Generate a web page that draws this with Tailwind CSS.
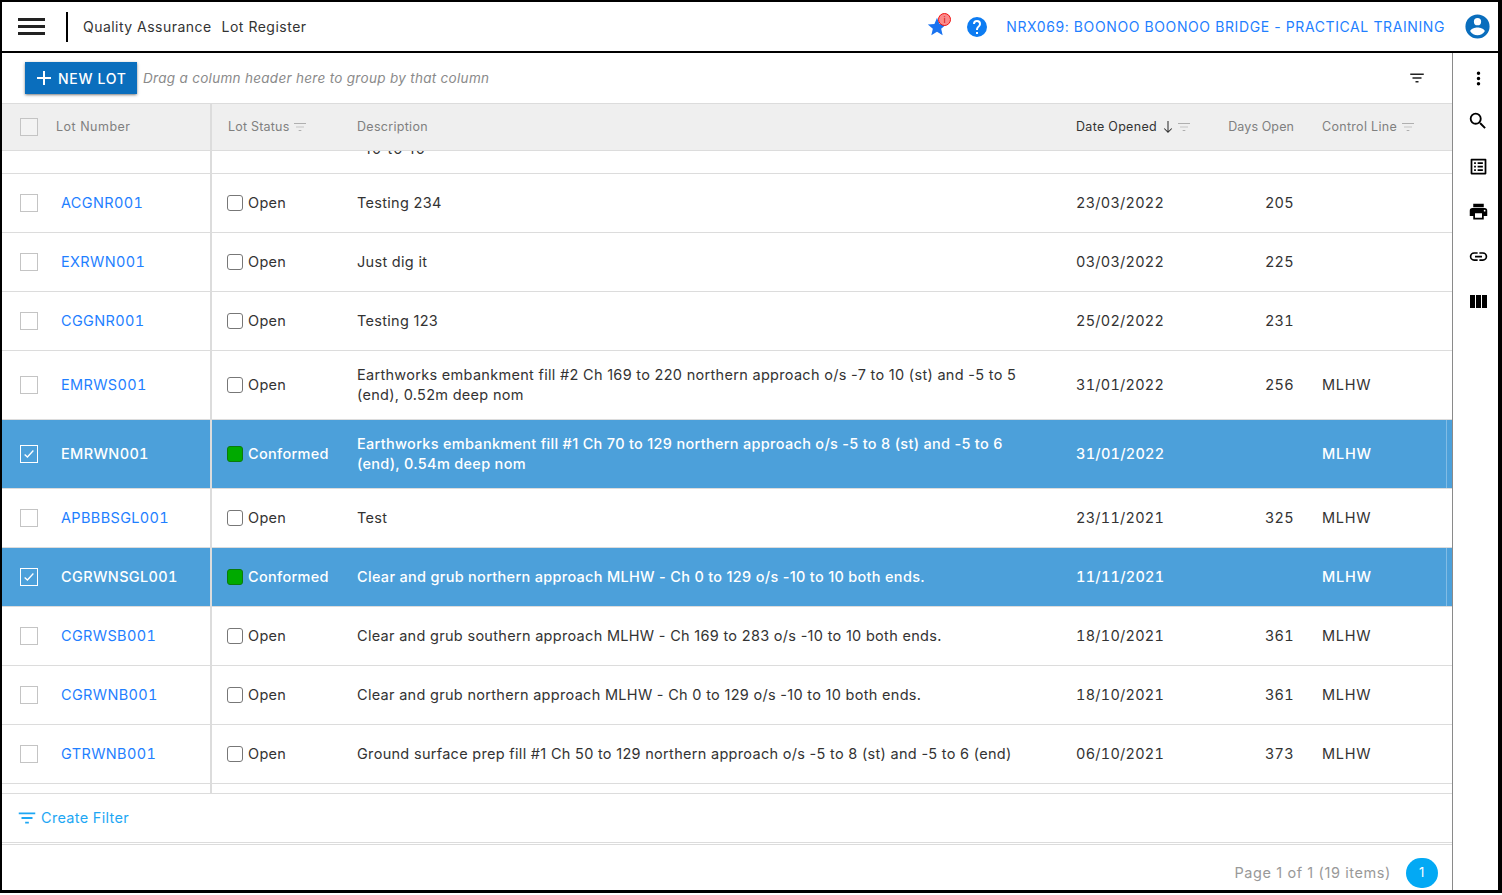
<!DOCTYPE html>
<html lang="en">
<head>
  <meta charset="UTF-8">
  <title>Lot Register</title>
  <script src="https://cdn.jsdelivr.net/npm/@tailwindcss/browser@4"></script>
</head>
<body class="bg-white font-['Inter',sans-serif] text-[14.5px] tracking-[0.3px] text-[#333] overflow-hidden">
  <div class="w-[1502px] h-[893px] border-t-2 border-l-2 border-r-4 border-b-[3px] border-black flex flex-col overflow-hidden bg-white">

    <!-- top bar -->
    <header class="h-[49px] shrink-0 border-b-2 border-black flex items-center box-content">
      <div class="ml-[16px] w-[27px] flex flex-col gap-[4px]">
        <span class="h-[3px] bg-[#222]"></span><span class="h-[3px] bg-[#222]"></span><span class="h-[3px] bg-[#222]"></span>
      </div>
      <div class="ml-[21px] w-0.5 h-[30px] bg-black"></div>
      <span class="ml-[15px] text-[14px] tracking-[0.47px]">Quality Assurance</span>
      <span class="ml-[10px] text-[14px] tracking-[0.5px]">Lot Register</span>
      <div class="ml-auto flex items-center">
        <div class="relative w-[22px] h-[22px]">
          <svg viewBox="0 0 24 24" class="w-[22px] h-[22px] fill-[#1a73f0]"><path d="M12 17.27 18.18 21l-1.64-7.03L22 9.24l-7.19-.61L12 2 9.19 8.63 2 9.24l5.46 4.73L5.82 21z"/></svg>
          <span class="absolute -top-[3px] left-[12px] w-[13px] h-[13px] rounded-full bg-[#fb8a8a] border border-[#f01010] text-[#d01010] text-[9px] leading-[11px] text-center">i</span>
        </div>
        <svg viewBox="0 0 24 24" class="ml-[17px] w-6 h-6 fill-[#0d7cf2]"><path d="M12 2a10 10 0 1 0 0 20 10 10 0 0 0 0-20zm1 17h-2v-2h2v2zm2.07-7.75-.9.92C13.45 12.9 13 13.5 13 15h-2v-.5c0-1.1.45-2.1 1.17-2.83l1.24-1.26A2 2 0 1 0 10 9H8a4 4 0 1 1 8 0c0 .88-.36 1.68-.93 2.25z"/></svg>
        <span class="ml-[17px] text-[14px] text-[#1f7fff] tracking-[0.6px]">NRX069: BOONOO BOONOO BRIDGE - PRACTICAL TRAINING</span>
        <svg viewBox="0 0 24 24" class="ml-[18px] mr-[6px] w-[29px] h-[29px] fill-[#0a6ebd]"><path d="M12 2a10 10 0 1 0 0 20 10 10 0 0 0 0-20zm0 3a3 3 0 1 1 0 6 3 3 0 0 1 0-6zm0 14.2a7.2 7.2 0 0 1-6-3.22c.03-1.99 4-3.08 6-3.08s5.97 1.09 6 3.08a7.2 7.2 0 0 1-6 3.22z"/></svg>
      </div>
    </header>

    <div class="flex-1 flex min-h-0">
      <main class="w-[1451px] shrink-0 border-r border-[#8a8a8a] flex flex-col min-h-0">

        <!-- group bar -->
        <div class="h-[50px] shrink-0 flex items-center">
          <button class="ml-[23px] w-[112px] h-8 bg-[#0a6ebd] text-white text-[14px] tracking-[0.7px] font-medium flex items-center pl-[7px] gap-[2px] shadow-sm shadow-black/40">
            <svg viewBox="0 0 24 24" class="w-6 h-6 fill-white"><path d="M19 13h-6v6h-2v-6H5v-2h6V5h2v6h6v2z"/></svg>
            NEW LOT
          </button>
          <span class="ml-[6px] mt-px text-[13.5px] italic text-[#8a8a8a]">Drag a column header here to group by that column</span>
          <svg viewBox="0 0 24 24" class="ml-auto mr-[26px] w-[18px] h-[18px] fill-[#222]"><path d="M10 18h4v-2h-4v2zM3 6v2h18V6H3zm3 7h12v-2H6v2z"/></svg>
        </div>

        <!-- column headers -->
        <div class="h-[48px] shrink-0 bg-[#efefef] border-y border-[#dcdcdc] grid grid-cols-[210px_145px_719px_152px_66px_1fr] items-center text-[12.5px] text-[#808080]">
          <div class="h-full border-r-2 border-[#dcdcdc] flex items-center pl-[18px]">
            <span class="w-[18px] h-[18px] border border-[#c4c4c4] bg-[#f3f3f3]"></span>
            <span class="ml-[18px] tracking-[0.5px]">Lot Number</span>
          </div>
          <div class="pl-[16px] flex items-center gap-[3px] tracking-[0.2px]">Lot Status
            <svg viewBox="0 0 24 24" class="w-4 h-4 fill-[#9a9a9a]"><path d="M10 18h4v-1h-4v1zM3 6v1h18V6H3zm3 6.500h12v-1H6v1z"/></svg>
          </div>
          <div>Description</div>
          <div class="flex items-center text-[#333]">Date Opened
            <svg viewBox="0 0 24 24" class="ml-[3px] w-4 h-4 fill-[#333]"><path d="M11.200 3h1.600v15l4.300-4.300 1.100 1.100-6.200 6.200-6.200-6.200 1.100-1.100 4.300 4.300z"/></svg>
            <svg viewBox="0 0 24 24" class="w-4 h-4 fill-[#9a9a9a]"><path d="M10 18h4v-1h-4v1zM3 6v1h18V6H3zm3 6.500h12v-1H6v1z"/></svg>
          </div>
          <div class="text-right tracking-[0.1px]">Days Open</div>
          <div class="pl-[28px] flex items-center gap-[3px]">Control Line
            <svg viewBox="0 0 24 24" class="w-4 h-4 fill-[#9a9a9a]"><path d="M10 18h4v-1h-4v1zM3 6v1h18V6H3zm3 6.500h12v-1H6v1z"/></svg>
          </div>
        </div>

        <!-- rows -->
        <div class="h-[643px] shrink-0 overflow-hidden border-b border-[#dcdcdc]">
          <!-- row scrolled under the header -->
          <div class="h-[23px] border-b border-[#dcdcdc] grid grid-cols-[210px_145px_719px_152px_66px_1fr] overflow-hidden">
            <div class="border-r-2 border-[#dcdcdc]"></div><div></div>
            <div class="-mt-[12px] h-[20px] leading-[20px] tracking-[1.2px]">-10 to 10</div>
          </div>

          <div class="h-[59px] border-b border-[#dcdcdc] grid grid-cols-[210px_145px_719px_152px_66px_1fr] items-center">
            <div class="h-full border-r-2 border-[#dcdcdc] flex items-center pl-[18px]"><span class="w-[18px] h-[18px] border border-[#c4c4c4]"></span><span class="ml-[23px] text-[#1f7fff] tabular-nums tracking-[0.35px]">ACGNR001</span></div>
            <div class="pl-[15px] flex items-center gap-[5px]"><span class="w-4 h-4 rounded-[3px] border border-[#777]"></span>Open</div>
            <div>Testing 234</div><div class="tabular-nums tracking-[0.25px]">23/03/2022</div><div class="text-right tabular-nums tracking-[0.3px]">205</div><div class="pl-[28px]"></div>
          </div>
          <div class="h-[59px] border-b border-[#dcdcdc] grid grid-cols-[210px_145px_719px_152px_66px_1fr] items-center">
            <div class="h-full border-r-2 border-[#dcdcdc] flex items-center pl-[18px]"><span class="w-[18px] h-[18px] border border-[#c4c4c4]"></span><span class="ml-[23px] text-[#1f7fff] tabular-nums tracking-[0.35px]">EXRWN001</span></div>
            <div class="pl-[15px] flex items-center gap-[5px]"><span class="w-4 h-4 rounded-[3px] border border-[#777]"></span>Open</div>
            <div>Just dig it</div><div class="tabular-nums tracking-[0.25px]">03/03/2022</div><div class="text-right tabular-nums tracking-[0.3px]">225</div><div class="pl-[28px]"></div>
          </div>
          <div class="h-[59px] border-b border-[#dcdcdc] grid grid-cols-[210px_145px_719px_152px_66px_1fr] items-center">
            <div class="h-full border-r-2 border-[#dcdcdc] flex items-center pl-[18px]"><span class="w-[18px] h-[18px] border border-[#c4c4c4]"></span><span class="ml-[23px] text-[#1f7fff] tabular-nums tracking-[0.35px]">CGGNR001</span></div>
            <div class="pl-[15px] flex items-center gap-[5px]"><span class="w-4 h-4 rounded-[3px] border border-[#777]"></span>Open</div>
            <div>Testing 123</div><div class="tabular-nums tracking-[0.25px]">25/02/2022</div><div class="text-right tabular-nums tracking-[0.3px]">231</div><div class="pl-[28px]"></div>
          </div>
          <div class="h-[69px] border-b border-[#dcdcdc] grid grid-cols-[210px_145px_719px_152px_66px_1fr] items-center">
            <div class="h-full border-r-2 border-[#dcdcdc] flex items-center pl-[18px]"><span class="w-[18px] h-[18px] border border-[#c4c4c4]"></span><span class="ml-[23px] text-[#1f7fff] tabular-nums tracking-[0.35px]">EMRWS001</span></div>
            <div class="pl-[15px] flex items-center gap-[5px]"><span class="w-4 h-4 rounded-[3px] border border-[#777]"></span>Open</div>
            <div class="leading-[20px] pr-[40px]">Earthworks embankment fill #2 Ch 169 to 220 northern approach o/s -7 to 10 (st) and -5 to 5 (end), 0.52m deep nom</div><div class="tabular-nums tracking-[0.25px]">31/01/2022</div><div class="text-right tabular-nums tracking-[0.3px]">256</div><div class="pl-[28px] tracking-[0.75px]">MLHW</div>
          </div>
          <div class="h-[69px] border-b border-[#dcdcdc] bg-[#4ca0da] text-white font-medium grid grid-cols-[210px_145px_719px_152px_66px_1fr] items-center relative">
            <div class="h-full border-r-2 border-[#dcdcdc] flex items-center pl-[18px]"><span class="w-[18px] h-[18px] border border-white flex items-center justify-center"><svg viewBox="0 0 16 16" class="w-[14px] h-[14px] fill-none stroke-white stroke-[1.5]"><path d="M3 8.500l3.200 3L13 4"/></svg></span><span class="ml-[23px] tabular-nums tracking-[0.35px]">EMRWN001</span></div>
            <div class="pl-[15px] flex items-center gap-[5px]"><span class="w-4 h-4 rounded-[3px] border border-[#0b7a0b] bg-[#00aa00]"></span>Conformed</div>
            <div class="leading-[20px] pr-[40px]">Earthworks embankment fill #1 Ch 70 to 129 northern approach o/s -5 to 8 (st) and -5 to 6 (end), 0.54m deep nom</div><div class="tabular-nums tracking-[0.25px]">31/01/2022</div><div class="text-right"></div><div class="pl-[28px] tracking-[0.75px]">MLHW</div>
            <span class="absolute right-[5px] inset-y-0 w-px bg-white/30"></span>
          </div>
          <div class="h-[59px] border-b border-[#dcdcdc] grid grid-cols-[210px_145px_719px_152px_66px_1fr] items-center">
            <div class="h-full border-r-2 border-[#dcdcdc] flex items-center pl-[18px]"><span class="w-[18px] h-[18px] border border-[#c4c4c4]"></span><span class="ml-[23px] text-[#1f7fff] tabular-nums tracking-[0.35px]">APBBBSGL001</span></div>
            <div class="pl-[15px] flex items-center gap-[5px]"><span class="w-4 h-4 rounded-[3px] border border-[#777]"></span>Open</div>
            <div>Test</div><div class="tabular-nums tracking-[0.25px]">23/11/2021</div><div class="text-right tabular-nums tracking-[0.3px]">325</div><div class="pl-[28px] tracking-[0.75px]">MLHW</div>
          </div>
          <div class="h-[59px] border-b border-[#dcdcdc] bg-[#4ca0da] text-white font-medium grid grid-cols-[210px_145px_719px_152px_66px_1fr] items-center relative">
            <div class="h-full border-r-2 border-[#dcdcdc] flex items-center pl-[18px]"><span class="w-[18px] h-[18px] border border-white flex items-center justify-center"><svg viewBox="0 0 16 16" class="w-[14px] h-[14px] fill-none stroke-white stroke-[1.5]"><path d="M3 8.500l3.200 3L13 4"/></svg></span><span class="ml-[23px] tabular-nums tracking-[0.35px]">CGRWNSGL001</span></div>
            <div class="pl-[15px] flex items-center gap-[5px]"><span class="w-4 h-4 rounded-[3px] border border-[#0b7a0b] bg-[#00aa00]"></span>Conformed</div>
            <div>Clear and grub northern approach MLHW - Ch 0 to 129 o/s -10 to 10 both ends.</div><div class="tabular-nums tracking-[0.25px]">11/11/2021</div><div class="text-right"></div><div class="pl-[28px] tracking-[0.75px]">MLHW</div>
            <span class="absolute right-[5px] inset-y-0 w-px bg-white/30"></span>
          </div>
          <div class="h-[59px] border-b border-[#dcdcdc] grid grid-cols-[210px_145px_719px_152px_66px_1fr] items-center">
            <div class="h-full border-r-2 border-[#dcdcdc] flex items-center pl-[18px]"><span class="w-[18px] h-[18px] border border-[#c4c4c4]"></span><span class="ml-[23px] text-[#1f7fff] tabular-nums tracking-[0.35px]">CGRWSB001</span></div>
            <div class="pl-[15px] flex items-center gap-[5px]"><span class="w-4 h-4 rounded-[3px] border border-[#777]"></span>Open</div>
            <div>Clear and grub southern approach MLHW - Ch 169 to 283 o/s -10 to 10 both ends.</div><div class="tabular-nums tracking-[0.25px]">18/10/2021</div><div class="text-right tabular-nums tracking-[0.3px]">361</div><div class="pl-[28px] tracking-[0.75px]">MLHW</div>
          </div>
          <div class="h-[59px] border-b border-[#dcdcdc] grid grid-cols-[210px_145px_719px_152px_66px_1fr] items-center">
            <div class="h-full border-r-2 border-[#dcdcdc] flex items-center pl-[18px]"><span class="w-[18px] h-[18px] border border-[#c4c4c4]"></span><span class="ml-[23px] text-[#1f7fff] tabular-nums tracking-[0.35px]">CGRWNB001</span></div>
            <div class="pl-[15px] flex items-center gap-[5px]"><span class="w-4 h-4 rounded-[3px] border border-[#777]"></span>Open</div>
            <div>Clear and grub northern approach MLHW - Ch 0 to 129 o/s -10 to 10 both ends.</div><div class="tabular-nums tracking-[0.25px]">18/10/2021</div><div class="text-right tabular-nums tracking-[0.3px]">361</div><div class="pl-[28px] tracking-[0.75px]">MLHW</div>
          </div>
          <div class="h-[59px] border-b border-[#dcdcdc] grid grid-cols-[210px_145px_719px_152px_66px_1fr] items-center">
            <div class="h-full border-r-2 border-[#dcdcdc] flex items-center pl-[18px]"><span class="w-[18px] h-[18px] border border-[#c4c4c4]"></span><span class="ml-[23px] text-[#1f7fff] tabular-nums tracking-[0.35px]">GTRWNB001</span></div>
            <div class="pl-[15px] flex items-center gap-[5px]"><span class="w-4 h-4 rounded-[3px] border border-[#777]"></span>Open</div>
            <div>Ground surface prep fill #1 Ch 50 to 129 northern approach o/s -5 to 8 (st) and -5 to 6 (end)</div><div class="tabular-nums tracking-[0.25px]">06/10/2021</div><div class="text-right tabular-nums tracking-[0.3px]">373</div><div class="pl-[28px] tracking-[0.75px]">MLHW</div>
          </div>
          <div class="h-[10px] grid grid-cols-[210px_1fr]"><div class="border-r-2 border-[#dcdcdc]"></div></div>
        </div>

        <!-- filter bar -->
        <div class="h-[49px] shrink-0 border-b border-[#dcdcdc] flex items-center pl-[14px] text-[#1ea7f4]">
          <svg viewBox="0 0 24 24" class="w-[22px] h-[22px] fill-[#1ea7f4]"><path d="M10 18h4v-2h-4v2zM3 6v2h18V6H3zm3 7h12v-2H6v2z"/></svg>
          <span class="ml-[3px]">Create Filter</span>
        </div>

        <!-- pager -->
        <div class="flex-1 mt-px border-t border-[#dcdcdc] flex items-end pb-[2px] justify-end pr-[14px] text-[#999] tracking-[0.6px]">
          <span class="h-[30px] leading-[29px]">Page 1 of 1 (19 items)</span>
          <span class="ml-[15px] w-8 h-[30px] rounded-full bg-[#03a9f4] text-white text-[13px] flex items-center justify-center">1</span>
        </div>
      </main>

      <!-- right tool rail -->
      <aside class="flex-1 flex flex-col pt-[4px] pl-[5px]">
        <div class="h-[42px] flex items-center justify-center"><svg viewBox="0 0 24 24" class="w-[21px] h-[21px] fill-black"><path d="M12 8a2 2 0 1 0 0-4 2 2 0 0 0 0 4zm0 2a2 2 0 1 0 0 4 2 2 0 0 0 0-4zm0 6a2 2 0 1 0 0 4 2 2 0 0 0 0-4z"/></svg></div>
        <div class="h-[44px] flex items-center justify-center"><svg viewBox="0 0 24 24" class="w-[22px] h-[22px] fill-black"><path d="M15.500 14h-.79l-.28-.27A6.470 6.470 0 0 0 16 9.500 6.500 6.500 0 1 0 9.500 16c1.610 0 3.090-.59 4.230-1.570l.27.28v.79l5 4.990L20.490 19l-4.990-5zm-6 0a4.500 4.500 0 1 1 0-9 4.500 4.500 0 0 1 0 9z"/></svg></div>
        <div class="h-[46px] flex items-center justify-center"><svg viewBox="0 0 24 24" class="w-[21px] h-[21px] fill-black"><path d="M19 5v14H5V5h14m1.100-2H3.900c-.5 0-.9.4-.9.9v16.200c0 .4.4.9.9.9h16.200c.4 0 .9-.5.9-.9V3.900c0-.5-.5-.9-.9-.9zM11 7h6v2h-6V7zm0 4h6v2h-6v-2zm0 4h6v2h-6v-2zM7 7h2v2H7V7zm0 4h2v2H7v-2zm0 4h2v2H7v-2z"/></svg></div>
        <div class="h-[45px] flex items-center justify-center"><svg viewBox="0 0 24 24" class="w-[21px] h-[21px] fill-black"><path d="M19 8H5a3 3 0 0 0-3 3v6h4v4h12v-4h4v-6a3 3 0 0 0-3-3zm-3 11H8v-5h8v5zm3-7a1 1 0 1 1 0-2 1 1 0 0 1 0 2zm-1-9H6v4h12V3z"/></svg></div>
        <div class="h-[45px] flex items-center justify-center"><svg viewBox="0 0 24 24" class="w-[21px] h-[21px] fill-black"><path d="M3.900 12A3.100 3.100 0 0 1 7 8.900h4V7H7a5 5 0 0 0 0 10h4v-1.900H7A3.100 3.100 0 0 1 3.900 12zM8 13h8v-2H8v2zm9-6h-4v1.900h4a3.100 3.100 0 0 1 0 6.200h-4V17h4a5 5 0 0 0 0-10z"/></svg></div>
        <div class="h-[45px] flex items-center justify-center"><svg viewBox="0 0 24 24" class="w-6 h-6 fill-black"><path d="M10 18h5V5h-5v13zm-6 0h5V5H4v13zM16 5v13h5V5h-5z"/></svg></div>
      </aside>
    </div>
  </div>
</body>
</html>
